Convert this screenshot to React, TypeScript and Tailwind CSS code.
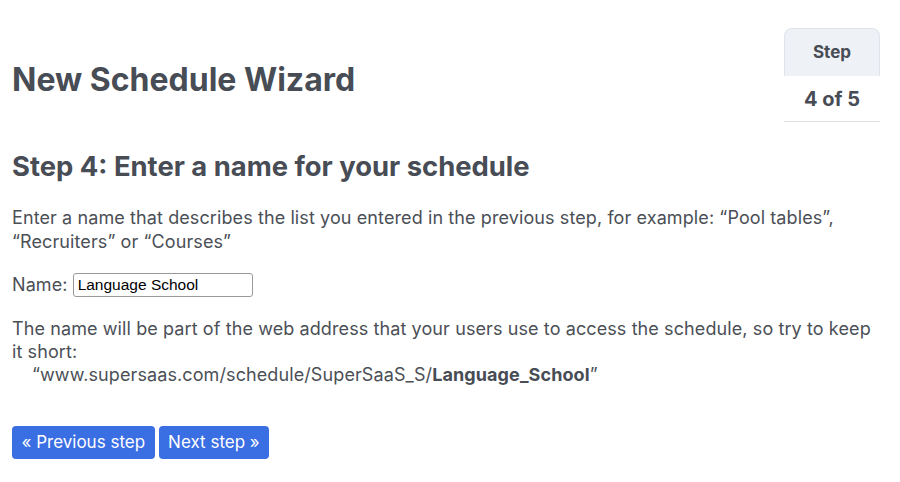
export default function App() {
  return (
    <div className="w-[900px] h-[482px] bg-white text-[#4b4f56] font-['Inter',sans-serif] pl-3 pr-[20px] relative">
      <div className="flex justify-between items-start">
        <h1 className="mt-[58px] text-[32px] font-bold leading-[44px] text-[#474c55]">New Schedule Wizard</h1>
        <div className="mt-[28px] w-[96px] text-center">
          <div className="h-[48px] pt-[1px] flex items-center justify-center bg-[#eef1f6] border border-b-0 border-[#dfe4ec] rounded-t-[8px] text-[17px] font-bold text-[#474c55]">Step</div>
          <div className="h-[46px] flex items-center justify-center border-b border-[#dee2e6] text-[20px] font-bold text-[#474c55]">4 of 5</div>
        </div>
      </div>
      <h2 className="mt-[26px] text-[27.4px] font-bold leading-[36px] text-[#474c55]">Step 4: Enter a name for your schedule</h2>
      <p className="mt-[22px] text-[18px] leading-[24px] tracking-[0.1px]">
        Enter a name that describes the list you entered in the previous step, for example: “Pool tables”, “Recruiters” or “Courses”
      </p>
      <div className="mt-[19px] flex items-center text-[18px] leading-[24px] tracking-[0.1px]">
        <label htmlFor="name">Name:</label>
        <input
          id="name"
          defaultValue="Language School"
          className="ml-[5px] w-[180px] h-[24px] px-[4px] border border-[#999] rounded-[3px] text-[15.5px] text-black font-['Liberation_Sans',sans-serif] tracking-normal outline-none"
        />
      </div>
      <p className="mt-[20px] text-[18px] leading-[23px] tracking-[0.1px]">
        The name will be part of the web address that your users use to access the schedule, so try to keep it short:
        <br />
        <span className="pl-[20px]">“www.supersaas.com/schedule/SuperSaaS_S/<b className="text-[#474c55]">Language_School</b>”</span>
      </p>
      <div className="mt-[40px] flex gap-[4px]">
        <button className="h-[33px] px-[9.5px] rounded-[4px] bg-[#3a6ee3] text-white text-[17px]">« Previous step</button>
        <button className="h-[33px] px-[9.5px] rounded-[4px] bg-[#3a6ee3] text-white text-[17px]">Next step »</button>
      </div>
    </div>
  );
}
